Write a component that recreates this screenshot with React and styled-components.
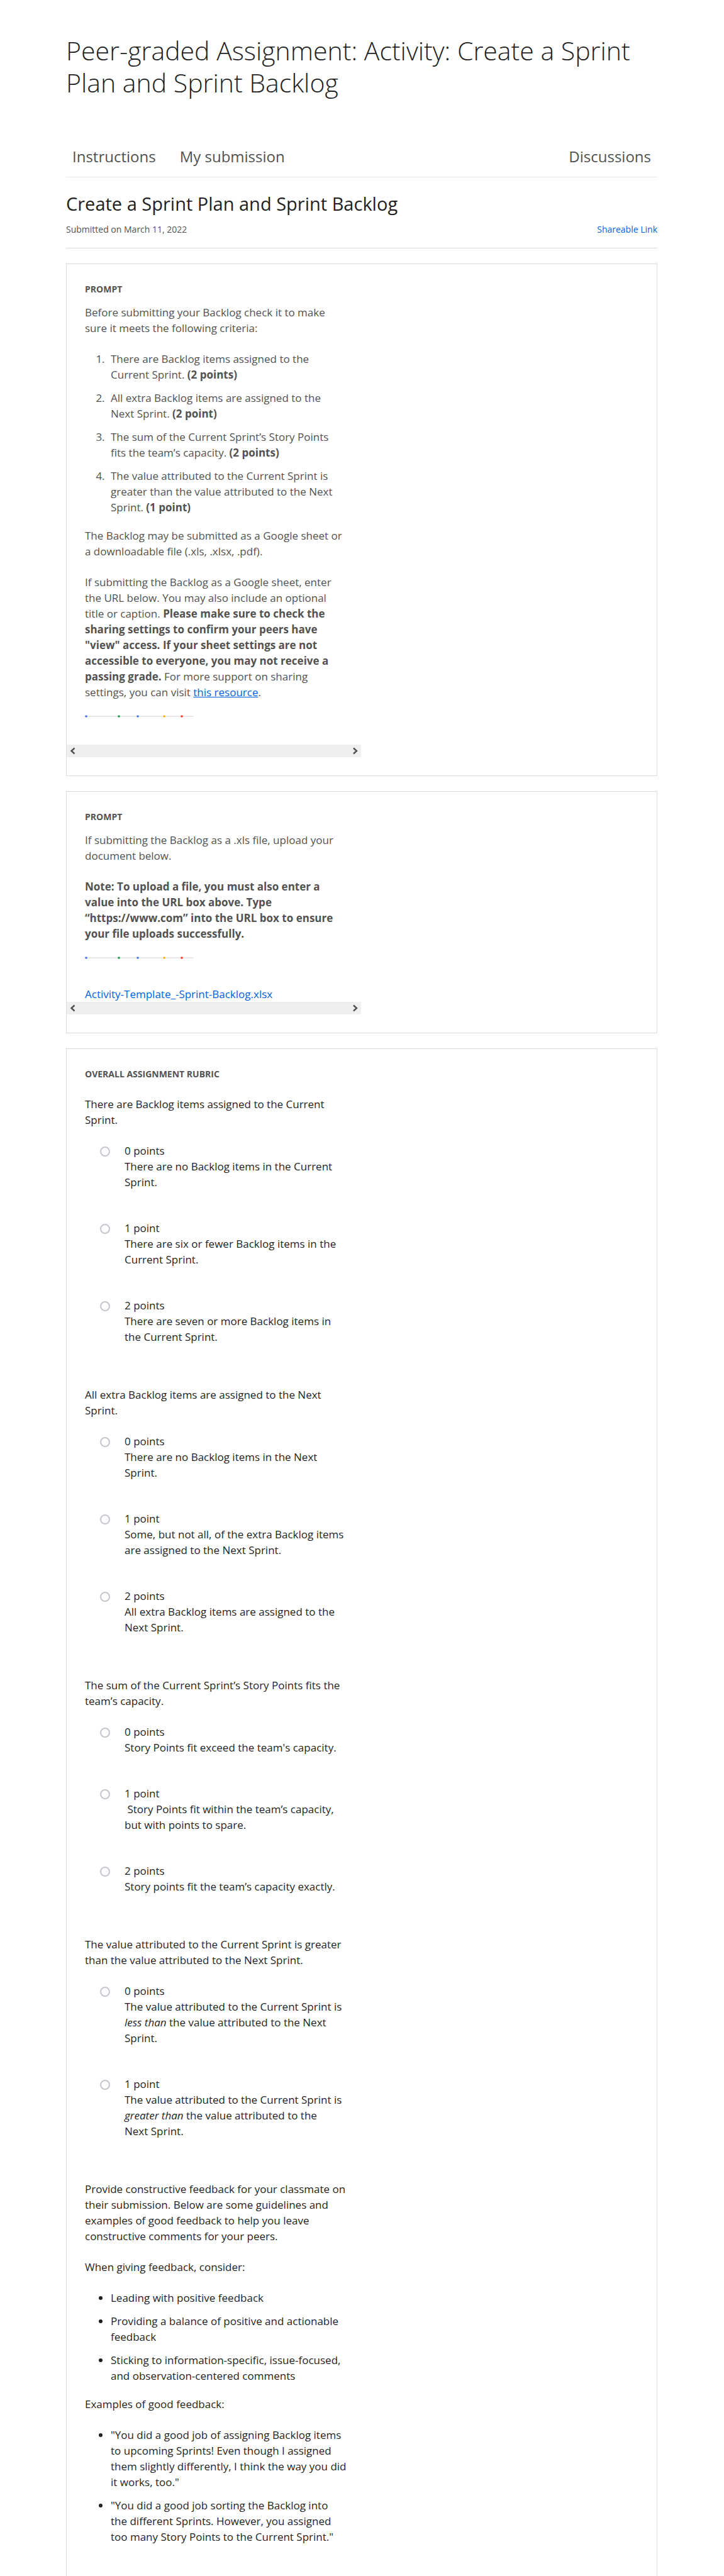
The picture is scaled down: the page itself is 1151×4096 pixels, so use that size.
import React from "react";
import styled, { createGlobalStyle } from "styled-components";

const GlobalStyle = createGlobalStyle`
  *, *::before, *::after { box-sizing: border-box; }
  body {
    margin: 0;
    background: #fff;
    color: #1f1f1f;
    font-family: "Open Sans", "Noto Sans", sans-serif;
    font-size: 17px;
    line-height: 25px;
  }
`;

const Page = styled.main`
  display: flex;
  flex-direction: column;
  min-height: 100vh;
  padding: 55px 106px 0 105px;
`;

const Title = styled.h1`
  margin: 0;
  font-size: 41px;
  line-height: 51px;
  font-weight: 300;
`;

const Tabs = styled.nav`
  display: flex;
  gap: 38px;
  margin-top: 64px;
  padding: 12px 10px 16px;
  border-bottom: 1px solid #e8e8e8;
`;

const Tab = styled.a`
  margin-left: ${(p) => (p.$end ? "auto" : "0")};
  color: #525252;
  font-size: 24px;
  line-height: 32px;
  text-decoration: none;
`;

const Summary = styled.header`
  padding: 22px 0 17px;
  border-bottom: 1px solid #dcdcdc;
`;

const SubmissionTitle = styled.h2`
  margin: 0;
  font-size: 29px;
  line-height: 40px;
  font-weight: 400;
`;

const Meta = styled.div`
  display: flex;
  justify-content: space-between;
  margin-top: 8px;
  color: #525252;
  font-size: 14px;
`;

const Link = styled.a`
  color: #0062e3;
  text-decoration: ${(p) => (p.$underlined ? "underline" : "none")};
`;

const Card = styled.section`
  margin-top: 24px;
  padding: 27px 0 29px;
  border: 1px solid #dcdcdc;
  color: #525252;
`;

const RubricCard = styled(Card)`
  flex: 1;
  padding-bottom: 0;
  border-bottom: 0;
  color: #1f1f1f;
`;

const Column = styled.div`
  width: 468px;
  max-width: 100%;
  padding: 0 ${(p) => (p.$wide ? 20 : 29)}px 0 29px;
`;

const Heading = styled.h3`
  margin: 0 0 ${(p) => (p.$spaced ? 23 : 12)}px;
  color: #525252;
  font-size: 14px;
  line-height: 25px;
  font-weight: 700;
`;

const Paragraph = styled.p`
  margin: 0 0 24px;
`;

const List = styled.ul`
  display: grid;
  gap: 12px;
  margin: 0 0 20px;
  padding-left: 41px;
`;

const NumberedList = styled(List)`
  padding-left: 36px;

  li {
    padding-left: 5px;
  }
`;

const Strip = styled.svg`
  display: block;
  margin-bottom: 43px;
`;

const FileLink = styled(Link)`
  display: block;
`;

const ScrollBar = styled.div`
  display: flex;
  justify-content: space-between;
  width: 468px;
  max-width: 100%;
  background: #efefef;
`;

const ScrollButton = styled.button`
  display: grid;
  place-items: center;
  width: 20px;
  height: 20px;
  padding: 0;
  border: 0;
  background: none;
`;

const Question = styled.fieldset`
  margin: 0 0 19px;
  padding: 0;
  border: 0;
`;

const Prompt = styled.legend`
  margin-bottom: 24px;
  padding: 0;
`;

const Option = styled.label`
  display: flex;
  gap: 23px;
  padding: 0 0 48px 24px;
`;

const Radio = styled.input`
  appearance: none;
  flex: none;
  width: 16px;
  height: 16px;
  margin: 6px 0 0;
  border: 2px solid #c7c6ce;
  border-radius: 50%;
  background: #fff;
`;

const OptionText = styled.span`
  display: block;
`;

const dots = [
  [2, "#4374d9"],
  [54, "#149a4a"],
  [84, "#4374d9"],
  [126, "#f4b400"],
  [154, "#ea3c2d"],
];

function DotStrip() {
  return (
    <Strip width="176" height="4" viewBox="0 0 176 4" aria-hidden="true">
      <path d="M2 2H173" stroke="#e8e8e8" strokeWidth="2" />
      {dots.map(([x, fill]) => (
        <circle key={x} cx={x} cy="2" r="1.8" fill={fill} />
      ))}
    </Strip>
  );
}

function HorizontalScroll() {
  return (
    <ScrollBar>
      <ScrollButton type="button" aria-label="Scroll left">
        <svg width="20" height="20" viewBox="0 0 20 20" fill="none" stroke="#505050" strokeWidth="2.4">
          <path d="M12.500 5.500L7.500 10L12.500 14.500" />
        </svg>
      </ScrollButton>
      <ScrollButton type="button" aria-label="Scroll right">
        <svg width="20" height="20" viewBox="0 0 20 20" fill="none" stroke="#505050" strokeWidth="2.4">
          <path d="M8 5.500L13 10L8 14.500" />
        </svg>
      </ScrollButton>
    </ScrollBar>
  );
}

const questions = [
  {
    id: "current",
    prompt: "There are Backlog items assigned to the Current Sprint.",
    options: [
      ["0 points", "There are no Backlog items in the Current Sprint."],
      ["1 point", "There are six or fewer Backlog items in the Current Sprint."],
      ["2 points", "There are seven or more Backlog items in the Current Sprint."],
    ],
  },
  {
    id: "extra",
    prompt: "All extra Backlog items are assigned to the Next Sprint.",
    options: [
      ["0 points", "There are no Backlog items in the Next Sprint."],
      ["1 point", "Some, but not all, of the extra Backlog items are assigned to the Next Sprint."],
      ["2 points", "All extra Backlog items are assigned to the Next Sprint."],
    ],
  },
  {
    id: "capacity",
    prompt: "The sum of the Current Sprint’s Story Points fits the team’s capacity.",
    options: [
      ["0 points", "Story Points fit exceed the team's capacity."],
      ["1 point", "\u00a0Story Points fit within the team’s capacity, but with points to spare."],
      ["2 points", "Story points fit the team’s capacity exactly."],
    ],
  },
  {
    id: "value",
    prompt: "The value attributed to the Current Sprint is greater than the value attributed to the Next Sprint.",
    options: [
      [
        "0 points",
        <>
          The value attributed to the Current Sprint is <em>less than</em> the value attributed to the Next Sprint.
        </>,
      ],
      [
        "1 point",
        <>
          The value attributed to the Current Sprint is <em>greater than</em> the value attributed to the Next&nbsp;Sprint.
        </>,
      ],
    ],
  },
];

function RubricQuestion({ id, prompt, options }) {
  return (
    <Question>
      <Prompt>{prompt}</Prompt>
      {options.map(([points, text]) => (
        <Option key={points} htmlFor={`${id}-${points[0]}`}>
          <Radio type="radio" name={id} id={`${id}-${points[0]}`} />
          <div>
            <OptionText>{points}</OptionText>
            <OptionText>{text}</OptionText>
          </div>
        </Option>
      ))}
    </Question>
  );
}

export default function App() {
  return (
    <>
      <GlobalStyle />
      <Page>
        <Title>Peer-graded Assignment: Activity: Create a Sprint Plan and Sprint Backlog</Title>
        <Tabs>
          <Tab href="#instructions">Instructions</Tab>
          <Tab href="#submission">My submission</Tab>
          <Tab href="#discussions" $end>Discussions</Tab>
        </Tabs>
        <Summary>
          <SubmissionTitle>Create a Sprint Plan and Sprint Backlog</SubmissionTitle>
          <Meta>
            <span>Submitted on March 11, 2022</span>
            <Link href="#share">Shareable Link</Link>
          </Meta>
        </Summary>

        <Card>
          <Column>
            <Heading>PROMPT</Heading>
            <Paragraph>Before submitting your Backlog check it to make sure it meets the following criteria:</Paragraph>
            <NumberedList as="ol">
              <li>There are Backlog items assigned to the Current Sprint. <strong>(2 points)</strong></li>
              <li>All extra Backlog items are assigned to the Next Sprint. <strong>(2 point)</strong></li>
              <li>The sum of the Current Sprint’s Story Points fits the team’s capacity. <strong>(2 points)</strong></li>
              <li>The value attributed to the Current Sprint is greater than the value attributed to the Next Sprint. <strong>(1 point)</strong></li>
            </NumberedList>
            <Paragraph>The Backlog may be submitted as a Google sheet or a downloadable file (.xls, .xlsx, .pdf).</Paragraph>
            <Paragraph>
              If submitting the Backlog as a Google sheet, enter the URL below. You may also include an optional title or
              caption. <strong>Please make sure to check the sharing settings to confirm your peers have "view" access. If
              your sheet settings are not accessible to everyone, you may not receive a passing grade.</strong> For more
              support on sharing settings, you can visit <Link href="#resource" $underlined>this resource</Link>.
            </Paragraph>
            <DotStrip />
          </Column>
          <HorizontalScroll />
        </Card>

        <Card>
          <Column>
            <Heading>PROMPT</Heading>
            <Paragraph>If submitting the Backlog as a .xls file, upload your document below.</Paragraph>
            <Paragraph>
              <strong>Note: To upload a file, you must also enter a value into the URL box above. Type
              “https://www.com” into the URL box to ensure your file uploads successfully.</strong>
            </Paragraph>
            <DotStrip />
            <FileLink href="#file">Activity-Template_-Sprint-Backlog.xlsx</FileLink>
          </Column>
          <HorizontalScroll />
        </Card>

        <RubricCard>
          <Column $wide>
            <Heading $spaced>OVERALL ASSIGNMENT RUBRIC</Heading>
            {questions.map((q) => (
              <RubricQuestion key={q.id} {...q} />
            ))}
            <Paragraph>
              Provide constructive feedback for your classmate on their submission. Below are some guidelines and
              examples of good feedback to help you leave constructive comments for your peers.
            </Paragraph>
            <Paragraph>When giving feedback, consider:</Paragraph>
            <List>
              <li>Leading with positive feedback</li>
              <li>Providing a balance of positive and actionable feedback</li>
              <li>Sticking to information-specific, issue-focused, and observation-centered comments</li>
            </List>
            <Paragraph>Examples of good feedback:</Paragraph>
            <List>
              <li>"You did a good job of assigning Backlog items to upcoming Sprints! Even though I assigned them slightly differently, I think the way you did it works, too."</li>
              <li>"You did a good job sorting the Backlog into the&nbsp;different Sprints. However, you assigned too many Story Points to the Current Sprint."</li>
            </List>
          </Column>
        </RubricCard>
      </Page>
    </>
  );
}
